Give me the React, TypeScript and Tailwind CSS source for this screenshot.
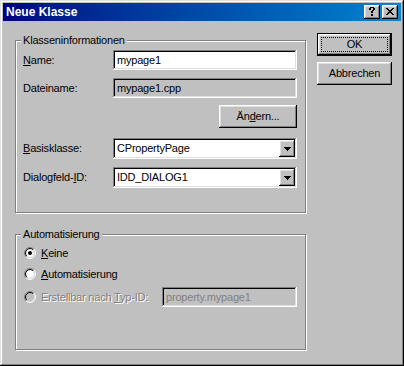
import React from "react";

const raised =
  "shadow-[inset_-1px_-1px_#000,inset_1px_1px_#fff,inset_-2px_-2px_#808080,inset_2px_2px_#dfdfdf]";
const sunken =
  "shadow-[inset_-1px_-1px_#fff,inset_1px_1px_#808080,inset_-2px_-2px_#dfdfdf,inset_2px_2px_#000]";
const frame =
  "shadow-[inset_-1px_-1px_#000,inset_1px_1px_#dfdfdf,inset_-2px_-2px_#808080,inset_2px_2px_#fff]";
const etched = "shadow-[inset_1px_1px_#fff,1px_1px_#fff]";

function U({ children }: { children: React.ReactNode }) {
  return <span className="underline decoration-1 underline-offset-[1px]">{children}</span>;
}

function Pixels({ rows, w, h }: { rows: string[]; w: number; h: number }) {
  const rects: React.ReactNode[] = [];
  rows.forEach((r, y) =>
    r.split("").forEach((c, x) => {
      if (c === "X") rects.push(<rect key={`${x}-${y}`} x={x} y={y} width={1} height={1} fill="#000" />);
    })
  );
  return (
    <svg width={w} height={h} viewBox={`0 0 ${w} ${h}`} shapeRendering="crispEdges">
      {rects}
    </svg>
  );
}

function Radio({ checked, disabled }: { checked?: boolean; disabled?: boolean }) {
  const arc = (r: number) => {
    const d = 0.7071 * r;
    return {
      tl: `M ${6 - d} ${6 + d} A ${r} ${r} 0 0 1 ${6 + d} ${6 - d}`,
      br: `M ${6 + d} ${6 - d} A ${r} ${r} 0 0 1 ${6 - d} ${6 + d}`,
    };
  };
  const o = arc(5.5);
  const i = arc(4.5);
  return (
    <svg width={12} height={12} viewBox="0 0 12 12" className="shrink-0">
      <circle cx={6} cy={6} r={4} fill={disabled ? "#c0c0c0" : "#fff"} />
      <path d={o.tl} stroke="#808080" fill="none" strokeWidth={1} />
      <path d={o.br} stroke="#fff" fill="none" strokeWidth={1} />
      <path d={i.tl} stroke="#000" fill="none" strokeWidth={1} />
      <path d={i.br} stroke="#dfdfdf" fill="none" strokeWidth={1} />
      {checked && <circle cx={6} cy={6} r={2} fill="#000" />}
    </svg>
  );
}

function Combo({ value }: { value: string }) {
  return (
    <div className={`relative w-[184px] h-[21px] bg-white ${sunken} pl-[4px] flex items-center`}>
      <span>{value}</span>
      <div
        className={`absolute right-[2px] top-[2px] w-[16px] h-[17px] bg-[#c0c0c0] ${raised} flex items-center justify-center`}
      >
        <Pixels w={7} h={4} rows={["XXXXXXX", ".XXXXX.", "..XXX..", "...X..."]} />
      </div>
    </div>
  );
}

export default function App() {
  return (
    <div
      className={`w-[404px] h-[366px] bg-[#c0c0c0] p-[3px] flex flex-col ${frame} font-['Liberation_Sans',Arial,sans-serif] text-[11px] tracking-[-0.2px] text-black leading-[13px]`}
    >
      {/* Title bar */}
      <div className="h-[18px] shrink-0 flex items-center pl-[3px] pr-[3px] bg-linear-to-r from-[#000080] to-[#1084d0]">
        <span className="text-white font-bold text-[12px] tracking-normal leading-none">Neue Klasse</span>
        <div className="ml-auto flex gap-[2px]">
          <div className={`w-[16px] h-[14px] bg-[#c0c0c0] ${raised} flex items-center justify-center pb-[1px]`}>
            <Pixels
              w={6}
              h={9}
              rows={[".XXXX.", "XX..XX", "XX..XX", "...XX.", "..XX..", "..XX..", "......", "..XX..", "..XX.."]}
            />
          </div>
          <div className={`w-[16px] h-[14px] bg-[#c0c0c0] ${raised} flex items-center justify-center pb-[1px]`}>
            <Pixels
              w={8}
              h={7}
              rows={["XX....XX", ".XX..XX.", "..XXXX..", "...XX...", "..XXXX..", ".XX..XX.", "XX....XX"]}
            />
          </div>
        </div>
      </div>

      {/* Body */}
      <div className="flex pl-[12px]">
        <div className="flex flex-col w-[291px] pt-[19px]">
          {/* Group 1 */}
          <div className={`relative h-[173px] border border-[#808080] ${etched} pt-[9px] pl-[7px]`}>
            <span className="absolute top-[-7px] left-[5px] px-[2px] bg-[#c0c0c0]">Klasseninformationen</span>
            <div className="flex items-center h-[20px]">
              <span className="w-[90px]">
                <U>N</U>ame:
              </span>
              <div className={`w-[184px] h-full bg-white ${sunken} pl-[4px] flex items-center`}>mypage1</div>
            </div>
            <div className="flex items-center h-[20px] mt-[8px]">
              <span className="w-[90px]">Dateiname:</span>
              <div className={`w-[184px] h-full bg-[#c0c0c0] ${sunken} pl-[4px] flex items-center`}>
                mypage1.cpp
              </div>
            </div>
            <div className="flex justify-end w-[274px] mt-[7px]">
              <div className={`w-[78px] h-[23px] ${raised} flex items-center justify-center`}>
                Än<U>d</U>ern...
              </div>
            </div>
            <div className="flex items-center mt-[10px]">
              <span className="w-[90px]">
                <U>B</U>asisklasse:
              </span>
              <Combo value="CPropertyPage" />
            </div>
            <div className="flex items-center mt-[8px]">
              <span className="w-[90px]">
                Dialogfeld-<U>I</U>D:
              </span>
              <Combo value="IDD_DIALOG1" />
            </div>
          </div>

          {/* Group 2 */}
          <div className={`relative mt-[21px] h-[116px] border border-[#808080] ${etched} pt-[8px] pl-[8px]`}>
            <span className="absolute top-[-7px] left-[5px] px-[2px] bg-[#c0c0c0]">Automatisierung</span>
            <div className="flex items-center gap-[5px] h-[20px]">
              <Radio checked />
              <span>
                <U>K</U>eine
              </span>
            </div>
            <div className="flex items-center gap-[5px] h-[20px] mt-[1px]">
              <Radio />
              <span>
                <U>A</U>utomatisierung
              </span>
            </div>
            <div className="flex items-center gap-[5px] h-[20px] mt-[3px] w-[273px]">
              <Radio disabled />
              <span className="text-[#808080] [text-shadow:1px_1px_0_#fff]">
                Erstellbar nach <U>T</U>yp-ID:
              </span>
              <div
                className={`ml-auto w-[135px] h-full bg-[#c0c0c0] ${sunken} pl-[4px] flex items-center text-[#808080]`}
              >
                property.mypage1
              </div>
            </div>
          </div>
        </div>

        {/* Buttons */}
        <div className="ml-[11px] pt-[12px] flex flex-col gap-[6px]">
          <div className="w-[75px] h-[23px] border border-black">
            <div className={`relative w-full h-full ${raised} flex items-center justify-center`}>
              OK
              <div className="absolute inset-[3px] border border-dotted border-black" />
            </div>
          </div>
          <div className={`w-[75px] h-[23px] ${raised} flex items-center justify-center`}>Abbrechen</div>
        </div>
      </div>
    </div>
  );
}
